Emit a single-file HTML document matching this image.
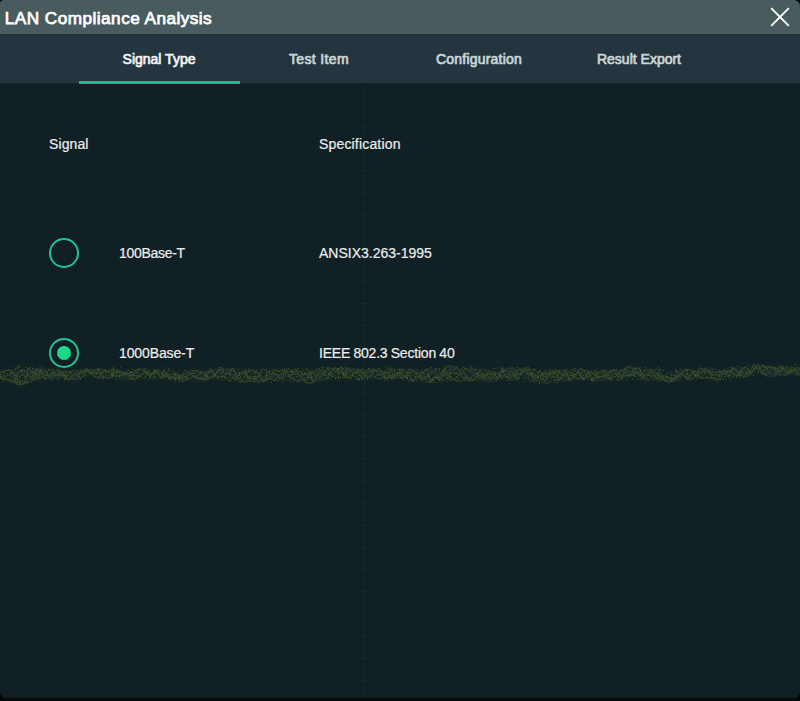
<!DOCTYPE html>
<html><head><meta charset="utf-8">
<style>
html,body{margin:0;padding:0;background:#000;}
body{width:800px;height:701px;position:relative;overflow:hidden;font-family:"Liberation Sans",sans-serif;}
#win{position:absolute;left:0;top:0;width:800px;height:698px;background:#102025;border-radius:4px 6px 6px 6px;overflow:hidden;}
#title{position:absolute;left:0;top:0;width:800px;height:34px;background:#485c5d;}
#title .t{position:absolute;left:4.8px;top:6.8px;font-size:17.2px;line-height:22px;color:#fff;-webkit-text-stroke:0.75px #fff;white-space:nowrap;letter-spacing:0.46px;}
#close{position:absolute;left:768px;top:5px;width:24px;height:24px;}
#tabs{position:absolute;left:0;top:34px;width:800px;height:50px;background:#24353f;}
#tabs .l1{position:absolute;left:0;top:0;width:800px;height:1px;background:#1f2e37;}
#tabs .l2{position:absolute;left:0;top:48px;width:800px;height:1px;background:#27373a;}
#tabs .l3{position:absolute;left:0;top:49px;width:800px;height:1px;background:#18272b;}
.tab{position:absolute;top:0;width:160px;height:50px;text-align:center;font-size:14px;line-height:50px;color:#ccd5d8;-webkit-text-stroke:0.7px #ccd5d8;}
.tab.sel{color:#f3f5f5;-webkit-text-stroke:0.7px #f3f5f5;}
#ul{position:absolute;left:79px;top:46.8px;width:161px;height:3.2px;background:#19bc86;}
.txt{position:absolute;font-size:14px;line-height:16px;color:#eceeee;white-space:nowrap;-webkit-text-stroke:0.2px #eceeee;}
.radio{position:absolute;width:26px;height:26px;border:2px solid #22c58b;border-radius:50%;}
.dot{position:absolute;left:6px;top:6px;width:14px;height:14px;border-radius:50%;background:#1ed88a;}
#bottom{position:absolute;left:0;top:698px;width:800px;height:3px;background:#070a0b;}
#bline{position:absolute;left:0;top:697px;width:800px;height:1px;background:#131d1f;}
#tl4{position:absolute;left:0;top:84px;width:800px;height:1px;background:#0e1b1f;}
</style></head>
<body>
<div id="win">
  <div id="title"><div class="t">LAN Compliance Analysis</div>
    <svg id="close" viewBox="0 0 24 24"><path d="M3.2 3.2 L20.8 20.8 M20.8 3.2 L3.2 20.8" stroke="#fff" stroke-width="1.9" fill="none"/></svg>
  </div>
  <div id="tabs"><div class="l1"></div><div class="l2"></div><div class="l3"></div>
    <div class="tab sel" style="left:79px;letter-spacing:0px">Signal Type</div>
    <div class="tab" style="left:239px;letter-spacing:0.37px">Test Item</div>
    <div class="tab" style="left:399px;letter-spacing:0.2px">Configuration</div>
    <div class="tab" style="left:559px;letter-spacing:0px">Result Export</div>
    <div id="ul"></div>
  </div>
  <svg style="position:absolute;left:0;top:0" width="800" height="697"><line x1="173.5" y1="84" x2="173.5" y2="697" stroke="#17262b" stroke-width="1" stroke-dasharray="1 3"/><line x1="555.5" y1="84" x2="555.5" y2="697" stroke="#17262b" stroke-width="1" stroke-dasharray="1 3"/><line x1="746.5" y1="84" x2="746.5" y2="697" stroke="#17262b" stroke-width="1" stroke-dasharray="1 3"/><line x1="0" y1="147.5" x2="800" y2="147.5" stroke="#17262b" stroke-width="1" stroke-dasharray="1 3"/><line x1="0" y1="258.5" x2="800" y2="258.5" stroke="#17262b" stroke-width="1" stroke-dasharray="1 3"/><line x1="0" y1="369.5" x2="800" y2="369.5" stroke="#17262b" stroke-width="1" stroke-dasharray="1 3"/><line x1="0" y1="480.5" x2="800" y2="480.5" stroke="#17262b" stroke-width="1" stroke-dasharray="1 3"/><line x1="0" y1="591.5" x2="800" y2="591.5" stroke="#17262b" stroke-width="1" stroke-dasharray="1 3"/><line x1="363.5" y1="84" x2="363.5" y2="697" stroke="#0f1b1f" stroke-width="1"/><line x1="365.5" y1="84" x2="365.5" y2="697" stroke="#0f1b1f" stroke-width="1"/><line x1="364.5" y1="84" x2="364.5" y2="697" stroke="#1a2a2f" stroke-width="1"/><path d="M362 104.01 h5 M362 126.18 h5 M362 148.35000000000002 h5 M362 170.52 h5 M362 192.69 h5 M362 214.86 h5 M362 237.03000000000003 h5 M362 259.20000000000005 h5 M362 281.37 h5 M362 303.54 h5 M362 325.71000000000004 h5 M362 347.88 h5 M362 370.05 h5 M362 392.22 h5 M362 414.39000000000004 h5 M362 436.56000000000006 h5 M362 458.73 h5 M362 480.90000000000003 h5 M362 503.07000000000005 h5 M362 525.24 h5 M362 547.4100000000001 h5 M362 569.58 h5 M362 591.75 h5 M362 613.9200000000001 h5 M362 636.09 h5 M362 658.26 h5 M362 680.4300000000001 h5 " stroke="#1c2c31" stroke-width="1"/></svg>
  <svg id="trace" style="position:absolute;left:0;top:355px" width="800" height="40"><defs><filter id="bl" x="-1%" y="-20%" width="102%" height="140%"><feGaussianBlur stdDeviation="0.55"/></filter></defs><g filter="url(#bl)"><path d="M0 15.1 L4 15.2 L8 13.3 L12 11.3 L16 10.9 L20 8.5 L24 9.6 L28 11.4 L32 11.9 L36 11.0 L40 10.4 L44 12.1 L48 12.4 L52 12.5 L56 13.3 L60 13.3 L64 13.4 L68 13.9 L72 15.4 L76 15.0 L80 13.3 L84 12.3 L88 12.7 L92 12.6 L96 13.0 L100 11.3 L104 13.1 L108 13.1 L112 11.2 L116 13.0 L120 12.4 L124 15.0 L128 13.6 L132 13.2 L136 13.8 L140 12.8 L144 12.0 L148 12.0 L152 12.2 L156 12.2 L160 13.3 L164 11.9 L168 12.1 L172 14.3 L176 13.8 L180 14.4 L184 15.3 L188 13.8 L192 13.0 L196 13.3 L200 13.7 L204 14.6 L208 13.0 L212 11.2 L216 12.0 L220 10.7 L224 12.3 L228 11.9 L232 13.7 L236 12.7 L240 11.7 L244 12.3 L248 12.8 L252 13.9 L256 13.1 L260 12.2 L264 12.2 L268 11.7 L272 12.2 L276 10.8 L280 12.2 L284 11.8 L288 12.4 L292 11.8 L296 13.2 L300 13.3 L304 13.0 L308 13.0 L312 13.8 L316 11.6 L320 11.8 L324 11.2 L328 10.8 L332 12.2 L336 11.9 L340 11.5 L344 10.3 L348 11.8 L352 11.6 L356 13.4 L360 13.4 L364 13.2 L368 11.7 L372 13.2 L376 12.8 L380 13.1 L384 12.6 L388 11.5 L392 10.8 L396 11.4 L400 12.1 L404 12.6 L408 12.7 L412 13.2 L416 12.9 L420 13.9 L424 12.8 L428 12.8 L432 12.7 L436 13.7 L440 12.9 L444 11.1 L448 9.1 L452 10.3 L456 10.5 L460 10.2 L464 10.9 L468 10.4 L472 11.1 L476 10.9 L480 13.0 L484 12.0 L488 14.0 L492 13.3 L496 11.8 L500 10.7 L504 11.4 L508 12.4 L512 11.3 L516 12.2 L520 11.9 L524 12.1 L528 12.3 L532 12.8 L536 12.9 L540 14.9 L544 13.9 L548 14.2 L552 13.7 L556 13.3 L560 14.6 L564 14.6 L568 12.6 L572 12.9 L576 11.8 L580 12.9 L584 13.8 L588 14.0 L592 14.6 L596 14.4 L600 13.2 L604 14.4 L608 13.5 L612 13.2 L616 14.0 L620 11.7 L624 11.5 L628 10.5 L632 11.0 L636 11.3 L640 11.0 L644 10.9 L648 11.6 L652 12.2 L656 12.8 L660 13.6 L664 12.9 L668 13.4 L672 13.8 L676 13.4 L680 11.7 L684 12.6 L688 11.5 L692 13.3 L696 12.5 L700 12.0 L704 11.8 L708 12.6 L712 12.1 L716 13.2 L720 13.7 L724 12.9 L728 12.9 L732 10.8 L736 10.1 L740 11.4 L744 10.6 L748 9.4 L752 10.0 L756 9.0 L760 7.8 L764 9.4 L768 9.6 L772 9.5 L776 9.5 L780 9.4 L784 9.8 L788 9.7 L792 10.3 L796 9.6 L800 9.9 L800 21.7 L796 22.6 L792 21.7 L788 22.0 L784 21.9 L780 21.7 L776 22.8 L772 23.4 L768 22.7 L764 21.4 L760 20.7 L756 20.4 L752 21.4 L748 23.3 L744 23.3 L740 24.6 L736 23.7 L732 24.2 L728 25.9 L724 25.7 L720 25.4 L716 26.0 L712 25.9 L708 24.7 L704 23.6 L700 24.9 L696 24.9 L692 25.8 L688 26.4 L684 26.5 L680 25.8 L676 27.0 L672 28.0 L668 28.9 L664 28.3 L660 26.8 L656 27.1 L652 27.3 L648 27.4 L644 26.0 L640 26.8 L636 24.7 L632 23.9 L628 23.8 L624 25.9 L620 26.1 L616 26.5 L612 27.6 L608 27.0 L604 27.1 L600 27.0 L596 27.2 L592 27.7 L588 26.2 L584 26.1 L580 26.3 L576 25.9 L572 27.3 L568 27.3 L564 28.5 L560 27.4 L556 28.8 L552 28.9 L548 28.8 L544 29.0 L540 28.7 L536 28.7 L532 27.1 L528 26.1 L524 27.1 L520 26.6 L516 26.5 L512 25.7 L508 25.8 L504 25.1 L500 25.5 L496 27.5 L492 27.9 L488 27.4 L484 27.2 L480 27.4 L476 27.6 L472 26.8 L468 26.9 L464 26.8 L460 26.5 L456 27.7 L452 27.2 L448 26.7 L444 27.0 L440 28.1 L436 29.8 L432 28.7 L428 28.7 L424 28.7 L420 28.0 L416 27.1 L412 27.9 L408 25.9 L404 26.6 L400 24.7 L396 23.9 L392 25.0 L388 26.0 L384 26.6 L380 26.0 L376 25.4 L372 26.3 L368 26.1 L364 26.6 L360 26.3 L356 26.3 L352 25.9 L348 25.3 L344 24.8 L340 25.7 L336 25.9 L332 26.8 L328 26.2 L324 27.1 L320 27.0 L316 27.7 L312 29.4 L308 29.9 L304 28.1 L300 28.6 L296 28.1 L292 28.2 L288 26.9 L284 27.5 L280 26.7 L276 26.6 L272 26.0 L268 26.2 L264 28.0 L260 27.6 L256 29.2 L252 28.3 L248 28.8 L244 27.9 L240 28.2 L236 26.5 L232 27.4 L228 27.6 L224 26.6 L220 24.4 L216 25.4 L212 24.6 L208 26.9 L204 26.8 L200 26.9 L196 27.0 L192 26.9 L188 26.2 L184 27.3 L180 27.3 L176 28.3 L172 26.6 L168 25.2 L164 25.7 L160 25.6 L156 24.9 L152 25.3 L148 25.6 L144 25.5 L140 25.1 L136 25.1 L132 25.6 L128 26.4 L124 27.1 L120 25.4 L116 24.5 L112 24.8 L108 24.4 L104 24.8 L100 24.2 L96 24.7 L92 23.0 L88 23.0 L84 23.1 L80 24.5 L76 26.3 L72 27.1 L68 25.3 L64 25.7 L60 25.7 L56 26.4 L52 25.8 L48 25.4 L44 25.0 L40 24.9 L36 26.6 L32 28.4 L28 28.5 L24 32.3 L20 32.9 L16 31.6 L12 28.8 L8 27.8 L4 27.5 L0 27.3 Z" fill="#1a2a22" opacity="0.55"/><path d="M-2 19.9 L3 25.3 L7 23.7 L14 27.5 L18 17.2 L25 15.4 L32 25.4 L35 14.7 L41 15.3 L44 23.2 L49 22.9 L53 18.6 L58 14.0 L62 21.4 L69 25.0 L72 20.3 L78 19.8 L84 15.2 L87 13.8 L90 18.1 L96 18.7 L99 14.9 L103 22.5 L110 23.2 L113 13.3 L120 19.1 L126 18.6 L131 20.6 L136 20.7 L139 21.4 L145 15.2 L150 21.9 L155 15.6 L158 19.0 L161 23.2 L167 21.3 L174 22.0 L179 22.5 L184 26.9 L190 17.6 L196 23.3 L203 24.2 L207 24.6 L214 20.7 L220 21.4 L224 21.8 L228 17.5 L233 13.6 L237 21.9 L242 16.4 L249 23.2 L254 23.6 L259 21.3 L263 26.9 L269 21.8 L275 26.1 L278 21.4 L284 16.6 L289 13.4 L292 18.0 L296 16.4 L302 21.9 L308 28.2 L313 27.7 L318 23.7 L322 20.3 L328 12.8 L334 14.2 L339 13.7 L344 18.9 L348 23.3 L352 18.9 L358 18.0 L362 21.8 L367 16.6 L373 16.3 L376 15.8 L379 15.0 L385 17.9 L392 21.3 L395 23.9 L402 13.4 L408 19.2 L413 26.8 L417 20.9 L424 23.5 L429 27.7 L435 22.6 L439 22.5 L443 14.8 L447 19.0 L450 17.1 L456 17.7 L460 20.2 L464 23.4 L470 26.4 L476 22.6 L480 14.3 L487 24.8 L492 18.3 L496 22.0 L502 20.0 L507 22.4 L511 15.8 L518 24.8 L524 12.5 L528 16.1 L532 22.1 L536 21.9 L539 16.1 L545 22.4 L550 19.3 L555 16.9 L560 24.3 L566 15.1 L569 24.1 L575 22.5 L579 17.9 L583 23.2 L587 22.0 L594 18.5 L599 22.9 L606 19.0 L611 15.2 L617 14.7 L620 20.1 L625 20.5 L630 21.2 L633 13.8 L639 12.7 L643 22.2 L649 16.1 L652 17.1 L658 17.9 L661 23.4 L667 26.9 L674 25.9 L678 23.3 L682 16.5 L687 24.4 L694 16.0 L698 17.1 L703 16.9 L707 14.5 L712 22.5 L718 23.8 L723 15.7 L729 22.9 L733 11.9 L738 17.9 L743 22.8 L749 20.0 L752 16.2 L758 9.8 L762 17.8 L768 11.4 L774 12.5 L780 17.9 L784 12.8 L790 16.4 L796 15.1 L800 20.8" stroke="#4a582c" stroke-width="1" fill="none" opacity="0.65"/><path d="M-2 15.9 L3 23.7 L9 26.0 L14 26.1 L19 29.2 L26 27.2 L32 26.3 L38 18.7 L43 22.8 L48 18.5 L52 22.4 L59 18.0 L62 16.1 L67 17.5 L74 15.6 L78 15.8 L84 21.3 L87 13.3 L92 18.5 L99 13.2 L102 15.0 L106 15.4 L112 19.4 L116 15.1 L120 15.8 L126 18.4 L131 24.0 L136 16.7 L143 23.6 L147 19.5 L154 19.0 L158 13.7 L165 22.1 L169 19.6 L174 17.9 L181 23.2 L185 15.2 L190 18.9 L196 22.9 L202 16.3 L205 17.9 L209 23.8 L214 19.9 L221 15.3 L227 14.8 L233 13.4 L239 24.7 L245 14.5 L249 24.0 L253 21.0 L258 27.5 L263 25.0 L267 23.2 L272 24.9 L275 23.9 L279 20.4 L284 15.2 L290 17.1 L295 13.8 L299 20.0 L305 19.4 L311 15.7 L315 19.7 L322 23.5 L328 12.3 L332 21.6 L336 19.3 L341 11.5 L348 21.5 L352 19.9 L356 17.9 L361 17.4 L365 18.2 L371 15.9 L375 21.7 L379 24.6 L384 22.0 L389 22.8 L392 13.9 L395 20.1 L401 14.6 L406 23.7 L411 15.2 L415 16.1 L419 19.2 L422 26.2 L427 20.8 L432 25.0 L439 18.9 L443 18.1 L446 17.1 L452 25.7 L458 21.2 L463 11.7 L468 16.6 L473 13.0 L478 19.5 L484 25.1 L489 15.9 L495 25.2 L501 16.9 L506 14.0 L511 25.9 L517 22.1 L523 14.7 L530 21.4 L533 14.9 L537 22.7 L543 19.5 L550 19.1 L555 15.7 L562 16.1 L568 20.9 L574 20.0 L578 24.0 L585 23.5 L590 16.0 L596 17.9 L603 16.8 L608 23.9 L612 20.7 L615 14.3 L619 25.8 L626 20.1 L630 19.8 L636 16.4 L641 23.2 L644 14.9 L649 14.1 L654 20.2 L657 19.9 L661 21.4 L666 23.0 L669 23.4 L673 26.8 L678 19.0 L683 20.4 L688 22.2 L694 18.9 L701 22.3 L708 17.1 L712 19.7 L719 20.1 L724 18.5 L731 15.8 L734 20.2 L741 20.1 L746 19.9 L750 17.2 L753 10.8 L758 14.8 L763 9.9 L769 16.6 L773 14.4 L777 13.4 L780 20.8 L787 17.9 L794 15.5 L800 12.6" stroke="#3e4c2a" stroke-width="1" fill="none" opacity="0.65"/><path d="M-2 16.7 L5 15.9 L11 14.8 L16 29.5 L19 15.6 L23 17.5 L26 27.9 L33 17.5 L37 19.7 L40 12.1 L47 17.0 L52 24.6 L59 19.1 L63 17.1 L69 24.3 L73 23.9 L77 19.6 L81 23.0 L88 14.6 L94 14.5 L100 13.4 L104 21.2 L108 23.0 L114 20.9 L118 21.3 L125 19.8 L128 17.4 L132 22.6 L136 15.8 L140 20.8 L146 17.5 L152 23.6 L157 15.8 L161 23.6 L167 16.2 L173 15.3 L179 20.7 L185 21.5 L188 21.9 L192 17.3 L198 15.5 L202 23.5 L206 17.2 L211 14.8 L218 24.1 L221 17.7 L227 17.9 L234 20.1 L238 20.8 L243 18.2 L249 24.8 L254 21.4 L260 23.2 L265 25.8 L269 22.9 L273 20.5 L277 18.6 L283 24.2 L289 16.0 L294 15.8 L299 20.5 L302 22.5 L308 22.5 L315 15.9 L318 12.9 L323 18.0 L328 15.7 L334 13.1 L341 18.7 L346 21.2 L350 13.7 L354 13.4 L358 21.3 L364 16.8 L369 14.0 L375 14.9 L379 15.0 L385 23.3 L391 13.1 L396 16.3 L400 23.8 L403 18.7 L409 26.4 L412 20.0 L418 14.3 L422 25.8 L426 19.0 L430 19.9 L433 14.3 L440 24.2 L446 14.3 L450 18.9 L454 17.6 L461 16.9 L465 26.4 L471 12.0 L475 21.2 L479 17.2 L484 25.8 L490 26.1 L495 18.4 L501 17.2 L507 15.1 L512 15.0 L517 14.6 L521 15.0 L525 16.3 L530 26.6 L536 26.4 L540 20.3 L543 24.6 L548 18.2 L551 16.6 L555 19.4 L561 23.9 L565 19.0 L569 25.9 L573 22.7 L579 24.0 L582 17.0 L587 15.0 L593 18.5 L600 20.3 L603 18.6 L607 14.4 L610 21.2 L613 17.9 L618 20.3 L622 21.6 L626 21.0 L631 12.8 L635 14.9 L641 17.6 L646 24.4 L650 16.2 L654 15.2 L657 12.9 L663 21.6 L669 27.6 L673 22.8 L680 15.4 L685 20.9 L692 23.6 L696 20.5 L700 17.6 L704 12.8 L709 16.2 L714 16.5 L717 18.5 L722 15.6 L728 15.4 L731 16.0 L736 13.2 L741 19.7 L746 19.2 L750 14.9 L754 10.0 L759 9.5 L764 16.3 L769 14.2 L773 11.1 L777 20.9 L782 13.3 L788 12.5 L793 17.6 L800 14.2" stroke="#2e3e38" stroke-width="1" fill="none" opacity="0.65"/><path d="M-2 20.9 L4 22.5 L10 19.1 L14 16.6 L21 29.9 L25 28.8 L28 13.9 L33 16.0 L38 25.2 L41 14.4 L45 21.4 L49 13.7 L54 18.4 L58 19.4 L64 20.0 L69 20.7 L76 25.1 L80 17.8 L87 16.0 L92 19.6 L98 23.6 L104 14.6 L110 18.2 L115 17.1 L119 22.2 L125 17.4 L129 18.6 L132 20.3 L136 14.5 L139 14.4 L145 14.4 L150 22.2 L155 15.3 L161 22.9 L164 15.7 L169 22.8 L174 23.0 L178 23.8 L182 19.4 L188 24.7 L194 21.1 L199 22.9 L205 24.2 L211 14.2 L215 20.2 L219 14.0 L222 19.6 L229 26.0 L233 22.6 L237 21.8 L242 25.9 L249 14.6 L255 16.0 L258 18.0 L264 26.7 L267 16.7 L270 19.5 L275 17.5 L280 24.2 L286 16.9 L291 21.5 L297 27.0 L301 23.7 L306 25.8 L310 16.8 L313 26.7 L317 19.5 L321 16.7 L324 19.8 L327 20.6 L332 15.3 L336 16.7 L341 12.0 L344 22.5 L348 12.5 L352 18.3 L359 16.1 L365 19.3 L370 22.8 L374 13.5 L380 21.1 L385 16.5 L392 22.7 L399 17.4 L405 22.2 L409 14.2 L413 15.7 L416 18.7 L422 17.8 L427 13.7 L431 27.7 L434 21.5 L440 24.7 L446 17.1 L452 23.3 L458 26.3 L462 26.0 L466 22.2 L470 25.0 L473 20.0 L477 17.6 L482 22.4 L488 18.9 L494 18.0 L498 24.8 L502 13.3 L506 22.2 L510 22.5 L515 21.7 L519 13.6 L523 16.8 L527 12.4 L532 19.1 L537 22.0 L543 17.7 L550 18.6 L556 15.5 L563 20.1 L570 16.4 L574 21.7 L578 16.0 L584 25.0 L588 16.5 L593 26.4 L596 22.0 L601 21.6 L605 21.1 L611 24.5 L617 20.1 L622 14.0 L628 20.1 L633 19.9 L638 16.8 L642 20.4 L647 19.5 L650 21.1 L655 20.7 L660 26.2 L664 20.4 L671 24.1 L675 23.2 L682 17.6 L688 14.2 L695 18.9 L699 22.6 L705 23.3 L711 22.3 L716 25.5 L720 24.2 L725 16.1 L732 17.2 L737 21.7 L741 14.7 L746 11.7 L751 19.2 L756 11.8 L763 19.3 L769 16.9 L775 20.0 L779 14.7 L782 10.7 L787 20.1 L793 12.1 L797 15.0" stroke="#4a582c" stroke-width="1" fill="none" opacity="0.65"/><path d="M-2 17.3 L5 15.6 L12 15.8 L17 28.6 L23 14.8 L29 18.9 L32 16.8 L36 20.4 L40 19.9 L46 15.3 L49 21.8 L54 15.4 L58 24.4 L63 17.8 L67 25.1 L73 22.8 L77 18.0 L82 15.3 L87 17.0 L94 16.8 L98 18.4 L105 16.7 L111 15.2 L116 16.3 L123 17.7 L129 22.6 L134 24.8 L139 21.9 L144 18.2 L147 18.1 L151 18.5 L158 16.5 L164 20.6 L168 18.0 L171 24.5 L175 19.9 L180 25.2 L186 22.0 L191 15.6 L198 15.5 L202 18.9 L208 21.5 L213 23.4 L220 11.9 L225 18.6 L230 19.4 L234 22.4 L239 26.4 L246 27.2 L251 25.7 L256 24.0 L263 13.7 L268 17.6 L274 15.1 L281 15.8 L285 14.9 L290 23.3 L293 15.0 L299 22.2 L305 17.9 L311 24.4 L317 14.5 L322 12.4 L328 24.8 L335 12.4 L339 18.4 L344 12.6 L351 15.8 L356 14.7 L361 15.3 L364 19.8 L368 22.6 L372 17.8 L376 15.5 L380 20.0 L385 23.5 L389 23.0 L392 23.9 L397 16.8 L403 23.3 L410 19.2 L413 16.1 L419 23.6 L425 15.7 L430 14.2 L433 18.2 L440 22.3 L447 11.3 L451 11.3 L455 12.3 L462 16.5 L467 21.4 L474 25.5 L479 19.6 L486 19.2 L490 24.0 L494 18.2 L498 18.8 L503 17.8 L508 12.9 L514 13.3 L519 19.7 L524 15.0 L527 17.4 L531 19.9 L535 24.6 L540 15.1 L545 28.2 L548 22.6 L555 19.0 L560 19.2 L564 22.4 L570 17.6 L575 19.3 L581 13.4 L584 16.5 L588 23.9 L593 24.9 L597 17.8 L603 14.9 L610 24.1 L614 17.9 L621 22.9 L626 12.1 L632 11.5 L638 19.1 L645 21.2 L648 25.5 L654 20.4 L657 22.9 L661 22.9 L668 26.8 L672 24.6 L676 23.1 L681 18.3 L686 13.9 L690 22.0 L693 14.3 L700 20.5 L705 13.4 L708 15.9 L715 20.1 L722 16.2 L726 19.3 L733 13.1 L739 17.0 L742 16.4 L747 18.8 L754 15.2 L759 13.5 L765 11.1 L771 12.7 L777 13.0 L781 12.2 L786 17.0 L791 15.0 L796 20.1 L800 16.5" stroke="#3e4c2a" stroke-width="1" fill="none" opacity="0.65"/><path d="M-2 21.3 L2 23.4 L6 17.6 L12 21.6 L16 12.3 L22 18.6 L28 19.0 L34 19.7 L41 24.1 L46 19.0 L49 22.5 L53 17.5 L59 14.2 L65 20.3 L70 18.3 L74 25.0 L80 22.6 L83 21.5 L87 14.7 L92 18.8 L96 20.9 L101 23.2 L108 20.5 L112 23.5 L118 16.7 L125 23.0 L129 17.7 L132 20.7 L136 17.1 L140 14.7 L145 16.2 L149 16.5 L154 23.5 L158 23.1 L164 19.8 L169 22.0 L174 22.5 L181 24.6 L185 15.8 L192 18.7 L198 17.2 L203 18.8 L209 24.9 L214 19.1 L218 14.5 L225 13.9 L232 22.1 L235 25.5 L238 20.9 L242 26.7 L246 25.6 L249 23.3 L253 14.7 L258 27.8 L264 24.8 L270 19.2 L273 19.4 L277 19.9 L281 20.0 L285 23.0 L290 19.6 L293 19.6 L298 27.2 L303 16.0 L308 19.2 L313 26.8 L320 25.3 L327 23.7 L334 12.4 L339 19.2 L344 18.9 L350 23.5 L353 19.1 L360 14.1 L364 24.3 L370 13.1 L373 22.9 L379 19.4 L385 22.4 L391 12.4 L394 21.6 L401 22.4 L406 17.4 L410 14.2 L416 17.4 L421 20.7 L426 23.0 L431 17.2 L437 16.0 L441 16.3 L446 23.2 L450 13.8 L456 14.6 L461 15.2 L467 14.2 L471 15.9 L475 22.4 L481 24.2 L486 14.8 L492 16.7 L496 18.4 L503 17.0 L508 24.6 L515 17.8 L518 23.1 L524 16.6 L530 18.2 L535 22.3 L540 21.6 L547 14.7 L552 19.2 L555 26.5 L559 17.0 L565 26.9 L572 17.5 L579 14.3 L584 25.1 L588 15.9 L594 25.1 L600 25.2 L605 18.3 L608 17.2 L615 14.8 L619 17.8 L622 16.5 L626 13.1 L631 18.0 L636 21.6 L641 25.1 L644 15.3 L648 16.5 L654 25.3 L659 15.1 L663 21.7 L667 25.1 L674 19.7 L680 23.6 L684 14.8 L691 25.0 L694 22.3 L699 13.2 L702 14.2 L708 14.8 L712 15.4 L718 19.7 L723 19.1 L727 12.9 L731 12.3 L735 18.8 L740 17.0 L745 14.8 L750 20.8 L755 14.0 L760 14.4 L765 20.3 L768 21.3 L775 21.0 L779 16.4 L785 13.5 L789 18.6 L793 17.3 L797 21.2 L801 11.1" stroke="#2e3e38" stroke-width="1" fill="none" opacity="0.65"/><g shape-rendering="crispEdges"><path d="M0 22h1v1h-1zM1 19h1v1h-1zM1 21h1v1h-1zM1 23h1v1h-1zM2 17h1v1h-1zM3 20h1v1h-1zM3 24h1v1h-1zM4 17h1v1h-1zM5 23h1v1h-1zM10 17h1v1h-1zM10 18h1v1h-1zM10 24h1v1h-1zM15 14h1v1h-1zM15 27h1v1h-1zM16 20h1v1h-1zM17 23h1v1h-1zM17 27h1v1h-1zM17 29h1v1h-1zM18 12h1v1h-1zM19 10h1v1h-1zM19 21h1v1h-1zM19 26h1v1h-1zM19 29h1v1h-1zM20 15h1v1h-1zM20 26h1v1h-1zM20 27h1v1h-1zM20 32h1v1h-1zM21 16h1v1h-1zM22 14h1v1h-1zM22 26h1v1h-1zM23 28h1v1h-1zM24 22h1v1h-1zM25 12h1v1h-1zM25 15h1v1h-1zM25 21h1v1h-1zM26 21h1v1h-1zM26 27h1v1h-1zM27 13h1v1h-1zM27 20h1v1h-1zM27 27h1v1h-1zM27 28h1v1h-1zM29 12h1v1h-1zM31 21h1v1h-1zM33 21h1v1h-1zM33 22h1v1h-1zM34 16h1v1h-1zM34 24h1v1h-1zM35 15h1v1h-1zM35 18h1v1h-1zM35 22h1v1h-1zM36 15h1v1h-1zM36 17h1v1h-1zM37 13h1v1h-1zM37 18h1v1h-1zM38 23h1v1h-1zM39 16h1v1h-1zM39 17h1v1h-1zM39 22h1v1h-1zM40 14h1v1h-1zM42 17h1v1h-1zM44 23h1v1h-1zM45 24h1v1h-1zM46 19h1v1h-1zM47 20h1v1h-1zM49 20h1v1h-1zM49 21h1v1h-1zM50 24h1v1h-1zM51 19h1v1h-1zM52 17h1v1h-1zM52 18h1v1h-1zM53 20h1v1h-1zM53 22h1v1h-1zM55 20h1v1h-1zM58 16h1v1h-1zM61 17h1v1h-1zM61 20h1v1h-1zM63 20h1v1h-1zM64 20h1v1h-1zM64 24h1v1h-1zM65 16h1v1h-1zM66 21h1v1h-1zM66 22h1v1h-1zM68 24h1v1h-1zM69 17h1v1h-1zM73 18h1v1h-1zM75 18h1v1h-1zM77 17h1v1h-1zM79 21h1v1h-1zM80 15h1v1h-1zM80 23h1v1h-1zM83 18h1v1h-1zM84 19h1v1h-1zM86 14h1v1h-1zM89 16h1v1h-1zM91 15h1v1h-1zM91 17h1v1h-1zM94 15h1v1h-1zM95 21h1v1h-1zM96 18h1v1h-1zM98 14h1v1h-1zM98 17h1v1h-1zM99 22h1v1h-1zM101 19h1v1h-1zM102 17h1v1h-1zM104 15h1v1h-1zM105 17h1v1h-1zM106 15h1v1h-1zM107 16h1v1h-1zM111 15h1v1h-1zM111 20h1v1h-1zM112 19h1v1h-1zM112 20h1v1h-1zM112 21h1v1h-1zM113 14h1v1h-1zM113 18h1v1h-1zM113 19h1v1h-1zM113 20h1v1h-1zM115 21h1v1h-1zM116 20h1v1h-1zM116 24h1v1h-1zM119 20h1v1h-1zM121 22h1v1h-1zM125 23h1v1h-1zM128 15h1v1h-1zM129 17h1v1h-1zM130 17h1v1h-1zM130 23h1v1h-1zM131 16h1v1h-1zM131 17h1v1h-1zM131 19h1v1h-1zM131 20h1v1h-1zM132 14h1v1h-1zM132 17h1v1h-1zM133 20h1v1h-1zM133 23h1v1h-1zM136 16h1v1h-1zM136 20h1v1h-1zM137 23h1v1h-1zM138 13h1v1h-1zM138 15h1v1h-1zM140 21h1v1h-1zM145 16h1v1h-1zM145 22h1v1h-1zM146 18h1v1h-1zM147 16h1v1h-1zM149 16h1v1h-1zM149 21h1v1h-1zM150 22h1v1h-1zM151 18h1v1h-1zM151 19h1v1h-1zM154 15h1v1h-1zM155 15h1v1h-1zM158 18h1v1h-1zM162 10h1v1h-1zM163 14h1v1h-1zM163 17h1v1h-1zM165 18h1v1h-1zM166 20h1v1h-1zM167 18h1v1h-1zM168 13h1v1h-1zM168 15h1v1h-1zM169 23h1v1h-1zM171 21h1v1h-1zM174 19h1v1h-1zM175 22h1v1h-1zM175 23h1v1h-1zM175 24h1v1h-1zM177 20h1v1h-1zM178 21h1v1h-1zM179 20h1v1h-1zM179 21h1v1h-1zM179 24h1v1h-1zM179 26h1v1h-1zM182 25h1v1h-1zM185 22h1v1h-1zM186 18h1v1h-1zM187 23h1v1h-1zM191 19h1v1h-1zM193 18h1v1h-1zM194 21h1v1h-1zM196 20h1v1h-1zM199 19h1v1h-1zM200 18h1v1h-1zM202 17h1v1h-1zM203 25h1v1h-1zM204 20h1v1h-1zM205 18h1v1h-1zM205 19h1v1h-1zM205 21h1v1h-1zM206 18h1v1h-1zM206 20h1v1h-1zM207 22h1v1h-1zM208 17h1v1h-1zM209 17h1v1h-1zM211 15h1v1h-1zM212 21h1v1h-1zM213 19h1v1h-1zM215 20h1v1h-1zM217 22h1v1h-1zM218 14h1v1h-1zM218 15h1v1h-1zM221 12h1v1h-1zM223 17h1v1h-1zM225 19h1v1h-1zM226 18h1v1h-1zM229 17h1v1h-1zM229 22h1v1h-1zM230 18h1v1h-1zM231 15h1v1h-1zM231 16h1v1h-1zM233 16h1v1h-1zM234 15h1v1h-1zM234 22h1v1h-1zM234 24h1v1h-1zM238 19h1v1h-1zM239 17h1v1h-1zM239 18h1v1h-1zM239 20h1v1h-1zM240 21h1v1h-1zM240 24h1v1h-1zM243 17h1v1h-1zM244 15h1v1h-1zM244 18h1v1h-1zM244 22h1v1h-1zM245 15h1v1h-1zM245 17h1v1h-1zM246 16h1v1h-1zM247 22h1v1h-1zM249 16h1v1h-1zM249 21h1v1h-1zM249 23h1v1h-1zM249 25h1v1h-1zM253 21h1v1h-1zM254 18h1v1h-1zM254 21h1v1h-1zM254 25h1v1h-1zM254 26h1v1h-1zM255 17h1v1h-1zM255 23h1v1h-1zM256 15h1v1h-1zM259 20h1v1h-1zM261 15h1v1h-1zM264 25h1v1h-1zM265 21h1v1h-1zM266 19h1v1h-1zM266 20h1v1h-1zM267 24h1v1h-1zM268 17h1v1h-1zM269 16h1v1h-1zM271 19h1v1h-1zM271 27h1v1h-1zM272 15h1v1h-1zM272 18h1v1h-1zM273 22h1v1h-1zM275 19h1v1h-1zM276 15h1v1h-1zM277 16h1v1h-1zM278 20h1v1h-1zM278 25h1v1h-1zM279 16h1v1h-1zM279 22h1v1h-1zM280 15h1v1h-1zM280 19h1v1h-1zM282 14h1v1h-1zM282 21h1v1h-1zM282 23h1v1h-1zM283 19h1v1h-1zM285 16h1v1h-1zM285 20h1v1h-1zM286 25h1v1h-1zM289 25h1v1h-1zM290 20h1v1h-1zM291 15h1v1h-1zM291 19h1v1h-1zM291 23h1v1h-1zM292 17h1v1h-1zM293 24h1v1h-1zM294 19h1v1h-1zM296 15h1v1h-1zM296 21h1v1h-1zM298 13h1v1h-1zM299 16h1v1h-1zM300 16h1v1h-1zM301 18h1v1h-1zM302 14h1v1h-1zM302 25h1v1h-1zM304 18h1v1h-1zM304 19h1v1h-1zM306 14h1v1h-1zM306 19h1v1h-1zM306 27h1v1h-1zM307 14h1v1h-1zM308 22h1v1h-1zM309 18h1v1h-1zM311 21h1v1h-1zM311 22h1v1h-1zM311 24h1v1h-1zM312 16h1v1h-1zM312 25h1v1h-1zM315 22h1v1h-1zM316 18h1v1h-1zM316 22h1v1h-1zM318 20h1v1h-1zM319 15h1v1h-1zM319 24h1v1h-1zM320 19h1v1h-1zM322 12h1v1h-1zM322 15h1v1h-1zM322 19h1v1h-1zM324 17h1v1h-1zM324 19h1v1h-1zM328 18h1v1h-1zM328 19h1v1h-1zM329 18h1v1h-1zM329 20h1v1h-1zM330 17h1v1h-1zM332 21h1v1h-1zM333 14h1v1h-1zM333 21h1v1h-1zM335 22h1v1h-1zM335 23h1v1h-1zM336 22h1v1h-1zM337 13h1v1h-1zM337 14h1v1h-1zM338 14h1v1h-1zM338 18h1v1h-1zM338 21h1v1h-1zM338 22h1v1h-1zM340 12h1v1h-1zM342 18h1v1h-1zM343 13h1v1h-1zM343 17h1v1h-1zM343 18h1v1h-1zM343 19h1v1h-1zM344 22h1v1h-1zM345 16h1v1h-1zM346 18h1v1h-1zM348 18h1v1h-1zM349 17h1v1h-1zM351 15h1v1h-1zM351 22h1v1h-1zM352 17h1v1h-1zM352 20h1v1h-1zM353 15h1v1h-1zM353 20h1v1h-1zM355 21h1v1h-1zM356 23h1v1h-1zM357 17h1v1h-1zM357 23h1v1h-1zM358 15h1v1h-1zM359 20h1v1h-1zM359 23h1v1h-1zM359 25h1v1h-1zM361 23h1v1h-1zM362 14h1v1h-1zM364 19h1v1h-1zM365 15h1v1h-1zM367 23h1v1h-1zM368 13h1v1h-1zM369 15h1v1h-1zM370 21h1v1h-1zM373 14h1v1h-1zM375 21h1v1h-1zM377 20h1v1h-1zM378 18h1v1h-1zM380 23h1v1h-1zM381 16h1v1h-1zM383 19h1v1h-1zM384 20h1v1h-1zM384 22h1v1h-1zM385 22h1v1h-1zM386 11h1v1h-1zM388 19h1v1h-1zM388 21h1v1h-1zM388 22h1v1h-1zM389 17h1v1h-1zM391 15h1v1h-1zM391 22h1v1h-1zM391 23h1v1h-1zM392 19h1v1h-1zM394 14h1v1h-1zM394 20h1v1h-1zM397 14h1v1h-1zM399 14h1v1h-1zM400 17h1v1h-1zM401 22h1v1h-1zM401 23h1v1h-1zM402 17h1v1h-1zM402 22h1v1h-1zM406 20h1v1h-1zM406 22h1v1h-1zM407 18h1v1h-1zM407 22h1v1h-1zM407 23h1v1h-1zM408 17h1v1h-1zM411 23h1v1h-1zM411 25h1v1h-1zM412 15h1v1h-1zM412 25h1v1h-1zM415 21h1v1h-1zM416 18h1v1h-1zM419 20h1v1h-1zM421 16h1v1h-1zM421 17h1v1h-1zM421 23h1v1h-1zM422 18h1v1h-1zM424 18h1v1h-1zM427 20h1v1h-1zM427 23h1v1h-1zM428 26h1v1h-1zM429 20h1v1h-1zM429 21h1v1h-1zM431 12h1v1h-1zM432 24h1v1h-1zM433 25h1v1h-1zM435 13h1v1h-1zM435 14h1v1h-1zM435 16h1v1h-1zM436 23h1v1h-1zM438 24h1v1h-1zM439 25h1v1h-1zM441 25h1v1h-1zM442 15h1v1h-1zM442 24h1v1h-1zM444 11h1v1h-1zM444 13h1v1h-1zM444 14h1v1h-1zM444 20h1v1h-1zM446 12h1v1h-1zM446 20h1v1h-1zM446 23h1v1h-1zM447 16h1v1h-1zM448 22h1v1h-1zM449 12h1v1h-1zM450 14h1v1h-1zM450 19h1v1h-1zM450 21h1v1h-1zM451 17h1v1h-1zM452 11h1v1h-1zM453 15h1v1h-1zM454 19h1v1h-1zM455 18h1v1h-1zM456 12h1v1h-1zM456 18h1v1h-1zM456 21h1v1h-1zM458 19h1v1h-1zM458 23h1v1h-1zM459 15h1v1h-1zM460 19h1v1h-1zM461 18h1v1h-1zM463 17h1v1h-1zM464 13h1v1h-1zM464 17h1v1h-1zM465 21h1v1h-1zM466 13h1v1h-1zM469 22h1v1h-1zM476 14h1v1h-1zM476 18h1v1h-1zM478 17h1v1h-1zM482 20h1v1h-1zM483 14h1v1h-1zM483 18h1v1h-1zM483 22h1v1h-1zM486 18h1v1h-1zM491 26h1v1h-1zM492 22h1v1h-1zM494 13h1v1h-1zM494 16h1v1h-1zM495 19h1v1h-1zM496 25h1v1h-1zM499 19h1v1h-1zM500 21h1v1h-1zM501 16h1v1h-1zM502 16h1v1h-1zM502 23h1v1h-1zM503 17h1v1h-1zM505 19h1v1h-1zM507 21h1v1h-1zM507 25h1v1h-1zM508 16h1v1h-1zM509 22h1v1h-1zM510 20h1v1h-1zM510 24h1v1h-1zM513 18h1v1h-1zM514 21h1v1h-1zM515 15h1v1h-1zM515 20h1v1h-1zM517 19h1v1h-1zM518 18h1v1h-1zM518 23h1v1h-1zM521 13h1v1h-1zM521 15h1v1h-1zM521 18h1v1h-1zM525 23h1v1h-1zM526 15h1v1h-1zM527 15h1v1h-1zM529 14h1v1h-1zM530 18h1v1h-1zM531 19h1v1h-1zM532 18h1v1h-1zM532 19h1v1h-1zM532 24h1v1h-1zM533 14h1v1h-1zM534 14h1v1h-1zM535 14h1v1h-1zM535 24h1v1h-1zM536 25h1v1h-1zM537 16h1v1h-1zM538 22h1v1h-1zM538 23h1v1h-1zM539 26h1v1h-1zM539 28h1v1h-1zM540 24h1v1h-1zM541 24h1v1h-1zM542 18h1v1h-1zM542 27h1v1h-1zM543 23h1v1h-1zM545 21h1v1h-1zM545 24h1v1h-1zM546 23h1v1h-1zM547 22h1v1h-1zM548 27h1v1h-1zM549 20h1v1h-1zM549 26h1v1h-1zM550 14h1v1h-1zM550 15h1v1h-1zM552 15h1v1h-1zM553 21h1v1h-1zM554 16h1v1h-1zM554 22h1v1h-1zM556 25h1v1h-1zM557 24h1v1h-1zM557 27h1v1h-1zM558 17h1v1h-1zM559 15h1v1h-1zM559 16h1v1h-1zM560 22h1v1h-1zM561 17h1v1h-1zM561 24h1v1h-1zM563 15h1v1h-1zM563 19h1v1h-1zM564 16h1v1h-1zM564 19h1v1h-1zM567 14h1v1h-1zM568 24h1v1h-1zM569 20h1v1h-1zM569 23h1v1h-1zM570 24h1v1h-1zM572 14h1v1h-1zM572 15h1v1h-1zM572 20h1v1h-1zM572 21h1v1h-1zM574 13h1v1h-1zM574 19h1v1h-1zM575 15h1v1h-1zM576 18h1v1h-1zM578 17h1v1h-1zM580 13h1v1h-1zM581 21h1v1h-1zM581 22h1v1h-1zM583 15h1v1h-1zM583 20h1v1h-1zM583 23h1v1h-1zM583 24h1v1h-1zM584 15h1v1h-1zM587 17h1v1h-1zM589 18h1v1h-1zM591 16h1v1h-1zM591 24h1v1h-1zM592 22h1v1h-1zM594 18h1v1h-1zM594 20h1v1h-1zM595 23h1v1h-1zM597 19h1v1h-1zM597 23h1v1h-1zM598 18h1v1h-1zM603 16h1v1h-1zM603 22h1v1h-1zM604 15h1v1h-1zM605 24h1v1h-1zM606 20h1v1h-1zM609 17h1v1h-1zM610 22h1v1h-1zM610 23h1v1h-1zM611 17h1v1h-1zM613 15h1v1h-1zM615 21h1v1h-1zM616 24h1v1h-1zM617 19h1v1h-1zM618 21h1v1h-1zM620 15h1v1h-1zM622 21h1v1h-1zM625 14h1v1h-1zM626 15h1v1h-1zM626 16h1v1h-1zM626 20h1v1h-1zM627 17h1v1h-1zM629 20h1v1h-1zM630 19h1v1h-1zM632 16h1v1h-1zM632 24h1v1h-1zM633 16h1v1h-1zM633 20h1v1h-1zM634 13h1v1h-1zM634 17h1v1h-1zM635 19h1v1h-1zM637 18h1v1h-1zM638 14h1v1h-1zM640 15h1v1h-1zM640 19h1v1h-1zM642 23h1v1h-1zM644 16h1v1h-1zM645 12h1v1h-1zM647 20h1v1h-1zM648 20h1v1h-1zM650 15h1v1h-1zM651 14h1v1h-1zM654 15h1v1h-1zM657 19h1v1h-1zM658 12h1v1h-1zM658 18h1v1h-1zM659 21h1v1h-1zM660 14h1v1h-1zM662 20h1v1h-1zM662 23h1v1h-1zM663 15h1v1h-1zM666 21h1v1h-1zM667 17h1v1h-1zM667 21h1v1h-1zM670 18h1v1h-1zM670 22h1v1h-1zM671 20h1v1h-1zM671 23h1v1h-1zM671 26h1v1h-1zM673 23h1v1h-1zM674 20h1v1h-1zM675 14h1v1h-1zM676 16h1v1h-1zM678 25h1v1h-1zM680 22h1v1h-1zM685 22h1v1h-1zM686 22h1v1h-1zM687 14h1v1h-1zM687 15h1v1h-1zM688 23h1v1h-1zM689 14h1v1h-1zM694 20h1v1h-1zM695 19h1v1h-1zM695 20h1v1h-1zM696 19h1v1h-1zM696 23h1v1h-1zM698 18h1v1h-1zM698 20h1v1h-1zM701 13h1v1h-1zM702 23h1v1h-1zM704 17h1v1h-1zM705 13h1v1h-1zM705 18h1v1h-1zM706 21h1v1h-1zM707 22h1v1h-1zM708 15h1v1h-1zM709 16h1v1h-1zM709 17h1v1h-1zM710 23h1v1h-1zM711 18h1v1h-1zM712 20h1v1h-1zM713 14h1v1h-1zM713 16h1v1h-1zM714 17h1v1h-1zM714 24h1v1h-1zM719 16h1v1h-1zM719 20h1v1h-1zM720 24h1v1h-1zM721 16h1v1h-1zM723 24h1v1h-1zM724 21h1v1h-1zM726 19h1v1h-1zM727 17h1v1h-1zM728 16h1v1h-1zM728 20h1v1h-1zM730 17h1v1h-1zM731 14h1v1h-1zM732 21h1v1h-1zM733 13h1v1h-1zM734 21h1v1h-1zM735 15h1v1h-1zM736 20h1v1h-1zM737 11h1v1h-1zM738 20h1v1h-1zM739 16h1v1h-1zM739 19h1v1h-1zM739 21h1v1h-1zM740 18h1v1h-1zM740 19h1v1h-1zM741 12h1v1h-1zM741 16h1v1h-1zM742 17h1v1h-1zM744 12h1v1h-1zM746 17h1v1h-1zM747 13h1v1h-1zM747 14h1v1h-1zM752 11h1v1h-1zM753 9h1v1h-1zM753 20h1v1h-1zM758 16h1v1h-1zM762 17h1v1h-1zM762 18h1v1h-1zM765 12h1v1h-1zM769 18h1v1h-1zM770 12h1v1h-1zM771 14h1v1h-1zM773 16h1v1h-1zM775 15h1v1h-1zM775 17h1v1h-1zM780 10h1v1h-1zM782 13h1v1h-1zM782 16h1v1h-1zM783 12h1v1h-1zM783 19h1v1h-1zM784 20h1v1h-1zM787 19h1v1h-1zM790 17h1v1h-1zM791 12h1v1h-1zM793 17h1v1h-1zM794 14h1v1h-1zM795 9h1v1h-1zM796 17h1v1h-1zM798 18h1v1h-1zM799 14h1v1h-1z" fill="#44522a"/><path d="M0 19h1v1h-1zM0 23h1v1h-1zM2 24h1v1h-1zM3 17h1v1h-1zM6 15h1v1h-1zM7 15h1v1h-1zM7 19h1v1h-1zM9 19h1v1h-1zM10 27h1v1h-1zM11 21h1v1h-1zM13 23h1v1h-1zM13 25h1v1h-1zM14 20h1v1h-1zM14 24h1v1h-1zM15 20h1v1h-1zM16 17h1v1h-1zM16 24h1v1h-1zM16 28h1v1h-1zM17 11h1v1h-1zM18 11h1v1h-1zM18 17h1v1h-1zM19 12h1v1h-1zM19 22h1v1h-1zM20 22h1v1h-1zM21 15h1v1h-1zM21 20h1v1h-1zM22 20h1v1h-1zM23 15h1v1h-1zM24 26h1v1h-1zM24 28h1v1h-1zM28 19h1v1h-1zM29 13h1v1h-1zM29 26h1v1h-1zM30 16h1v1h-1zM32 13h1v1h-1zM32 16h1v1h-1zM32 17h1v1h-1zM32 20h1v1h-1zM33 13h1v1h-1zM33 17h1v1h-1zM33 24h1v1h-1zM35 17h1v1h-1zM35 24h1v1h-1zM35 25h1v1h-1zM37 16h1v1h-1zM40 18h1v1h-1zM41 14h1v1h-1zM43 20h1v1h-1zM45 16h1v1h-1zM45 23h1v1h-1zM49 15h1v1h-1zM50 17h1v1h-1zM52 14h1v1h-1zM52 16h1v1h-1zM52 19h1v1h-1zM53 14h1v1h-1zM53 17h1v1h-1zM54 17h1v1h-1zM54 19h1v1h-1zM57 17h1v1h-1zM57 24h1v1h-1zM58 19h1v1h-1zM58 20h1v1h-1zM59 20h1v1h-1zM59 21h1v1h-1zM62 17h1v1h-1zM62 21h1v1h-1zM63 17h1v1h-1zM63 18h1v1h-1zM64 21h1v1h-1zM64 22h1v1h-1zM65 15h1v1h-1zM66 19h1v1h-1zM66 20h1v1h-1zM67 12h1v1h-1zM70 16h1v1h-1zM70 18h1v1h-1zM71 16h1v1h-1zM71 18h1v1h-1zM71 20h1v1h-1zM77 15h1v1h-1zM77 20h1v1h-1zM77 26h1v1h-1zM78 21h1v1h-1zM79 24h1v1h-1zM80 24h1v1h-1zM81 22h1v1h-1zM82 16h1v1h-1zM84 15h1v1h-1zM84 22h1v1h-1zM87 14h1v1h-1zM89 18h1v1h-1zM92 18h1v1h-1zM93 20h1v1h-1zM94 21h1v1h-1zM97 14h1v1h-1zM97 16h1v1h-1zM99 19h1v1h-1zM100 18h1v1h-1zM103 23h1v1h-1zM105 18h1v1h-1zM105 20h1v1h-1zM107 17h1v1h-1zM108 15h1v1h-1zM110 20h1v1h-1zM110 22h1v1h-1zM112 14h1v1h-1zM112 17h1v1h-1zM113 12h1v1h-1zM114 14h1v1h-1zM114 16h1v1h-1zM116 17h1v1h-1zM116 21h1v1h-1zM118 16h1v1h-1zM119 16h1v1h-1zM119 18h1v1h-1zM119 22h1v1h-1zM120 12h1v1h-1zM120 23h1v1h-1zM121 19h1v1h-1zM122 24h1v1h-1zM123 17h1v1h-1zM124 19h1v1h-1zM124 20h1v1h-1zM127 15h1v1h-1zM128 19h1v1h-1zM128 22h1v1h-1zM129 19h1v1h-1zM129 20h1v1h-1zM129 24h1v1h-1zM130 16h1v1h-1zM130 19h1v1h-1zM131 24h1v1h-1zM133 18h1v1h-1zM134 15h1v1h-1zM136 22h1v1h-1zM138 20h1v1h-1zM138 22h1v1h-1zM143 19h1v1h-1zM145 13h1v1h-1zM147 17h1v1h-1zM148 17h1v1h-1zM148 24h1v1h-1zM153 16h1v1h-1zM154 18h1v1h-1zM154 21h1v1h-1zM155 18h1v1h-1zM156 15h1v1h-1zM159 21h1v1h-1zM161 22h1v1h-1zM162 18h1v1h-1zM163 19h1v1h-1zM163 20h1v1h-1zM163 21h1v1h-1zM164 15h1v1h-1zM164 20h1v1h-1zM168 23h1v1h-1zM169 24h1v1h-1zM175 19h1v1h-1zM175 20h1v1h-1zM175 25h1v1h-1zM177 19h1v1h-1zM178 24h1v1h-1zM180 20h1v1h-1zM181 22h1v1h-1zM182 19h1v1h-1zM182 22h1v1h-1zM183 21h1v1h-1zM183 23h1v1h-1zM185 21h1v1h-1zM187 17h1v1h-1zM192 15h1v1h-1zM194 15h1v1h-1zM195 20h1v1h-1zM197 17h1v1h-1zM199 24h1v1h-1zM208 22h1v1h-1zM210 13h1v1h-1zM210 19h1v1h-1zM211 14h1v1h-1zM211 16h1v1h-1zM211 17h1v1h-1zM212 16h1v1h-1zM214 18h1v1h-1zM214 22h1v1h-1zM215 14h1v1h-1zM215 21h1v1h-1zM218 24h1v1h-1zM220 14h1v1h-1zM221 17h1v1h-1zM221 22h1v1h-1zM223 13h1v1h-1zM223 15h1v1h-1zM223 16h1v1h-1zM223 21h1v1h-1zM224 21h1v1h-1zM224 22h1v1h-1zM224 23h1v1h-1zM225 21h1v1h-1zM226 13h1v1h-1zM227 18h1v1h-1zM228 18h1v1h-1zM229 14h1v1h-1zM229 20h1v1h-1zM230 26h1v1h-1zM232 22h1v1h-1zM233 19h1v1h-1zM233 22h1v1h-1zM235 20h1v1h-1zM236 22h1v1h-1zM237 14h1v1h-1zM237 22h1v1h-1zM238 23h1v1h-1zM241 18h1v1h-1zM242 25h1v1h-1zM244 21h1v1h-1zM245 18h1v1h-1zM246 24h1v1h-1zM247 20h1v1h-1zM248 23h1v1h-1zM250 22h1v1h-1zM251 25h1v1h-1zM251 26h1v1h-1zM253 26h1v1h-1zM255 21h1v1h-1zM256 18h1v1h-1zM256 21h1v1h-1zM257 23h1v1h-1zM257 25h1v1h-1zM258 25h1v1h-1zM259 17h1v1h-1zM260 18h1v1h-1zM262 23h1v1h-1zM262 25h1v1h-1zM263 21h1v1h-1zM265 20h1v1h-1zM267 17h1v1h-1zM267 20h1v1h-1zM267 25h1v1h-1zM269 18h1v1h-1zM270 21h1v1h-1zM270 23h1v1h-1zM272 17h1v1h-1zM273 17h1v1h-1zM275 15h1v1h-1zM276 24h1v1h-1zM277 20h1v1h-1zM279 23h1v1h-1zM282 27h1v1h-1zM283 23h1v1h-1zM283 25h1v1h-1zM284 13h1v1h-1zM284 17h1v1h-1zM284 18h1v1h-1zM288 19h1v1h-1zM288 21h1v1h-1zM289 21h1v1h-1zM289 23h1v1h-1zM291 26h1v1h-1zM292 18h1v1h-1zM292 19h1v1h-1zM293 23h1v1h-1zM294 16h1v1h-1zM297 16h1v1h-1zM298 17h1v1h-1zM299 25h1v1h-1zM299 26h1v1h-1zM300 21h1v1h-1zM301 17h1v1h-1zM303 20h1v1h-1zM304 23h1v1h-1zM304 27h1v1h-1zM307 23h1v1h-1zM309 23h1v1h-1zM310 17h1v1h-1zM310 18h1v1h-1zM311 18h1v1h-1zM314 16h1v1h-1zM317 16h1v1h-1zM318 17h1v1h-1zM318 18h1v1h-1zM320 15h1v1h-1zM324 16h1v1h-1zM325 19h1v1h-1zM326 14h1v1h-1zM327 17h1v1h-1zM327 22h1v1h-1zM328 22h1v1h-1zM330 19h1v1h-1zM331 23h1v1h-1zM333 19h1v1h-1zM333 20h1v1h-1zM335 17h1v1h-1zM336 15h1v1h-1zM337 20h1v1h-1zM338 19h1v1h-1zM339 16h1v1h-1zM339 23h1v1h-1zM340 21h1v1h-1zM340 22h1v1h-1zM345 15h1v1h-1zM346 17h1v1h-1zM346 20h1v1h-1zM346 22h1v1h-1zM347 12h1v1h-1zM347 15h1v1h-1zM349 21h1v1h-1zM350 23h1v1h-1zM357 13h1v1h-1zM358 23h1v1h-1zM359 24h1v1h-1zM360 22h1v1h-1zM361 15h1v1h-1zM361 22h1v1h-1zM362 24h1v1h-1zM363 16h1v1h-1zM363 17h1v1h-1zM363 22h1v1h-1zM364 22h1v1h-1zM366 22h1v1h-1zM367 24h1v1h-1zM368 18h1v1h-1zM371 20h1v1h-1zM373 17h1v1h-1zM376 19h1v1h-1zM378 13h1v1h-1zM378 23h1v1h-1zM379 13h1v1h-1zM380 18h1v1h-1zM381 15h1v1h-1zM382 22h1v1h-1zM384 21h1v1h-1zM384 25h1v1h-1zM385 18h1v1h-1zM387 13h1v1h-1zM387 16h1v1h-1zM388 14h1v1h-1zM389 22h1v1h-1zM390 14h1v1h-1zM392 20h1v1h-1zM392 23h1v1h-1zM393 19h1v1h-1zM394 16h1v1h-1zM396 20h1v1h-1zM397 20h1v1h-1zM399 13h1v1h-1zM399 15h1v1h-1zM399 18h1v1h-1zM399 20h1v1h-1zM400 22h1v1h-1zM401 18h1v1h-1zM401 20h1v1h-1zM402 16h1v1h-1zM402 20h1v1h-1zM404 15h1v1h-1zM405 21h1v1h-1zM409 21h1v1h-1zM409 25h1v1h-1zM410 17h1v1h-1zM410 20h1v1h-1zM413 24h1v1h-1zM414 17h1v1h-1zM414 21h1v1h-1zM414 24h1v1h-1zM416 19h1v1h-1zM416 24h1v1h-1zM416 26h1v1h-1zM423 19h1v1h-1zM424 16h1v1h-1zM425 23h1v1h-1zM425 27h1v1h-1zM428 21h1v1h-1zM428 22h1v1h-1zM429 17h1v1h-1zM430 24h1v1h-1zM431 19h1v1h-1zM432 27h1v1h-1zM433 18h1v1h-1zM433 24h1v1h-1zM434 21h1v1h-1zM435 21h1v1h-1zM435 27h1v1h-1zM436 13h1v1h-1zM438 14h1v1h-1zM438 17h1v1h-1zM439 13h1v1h-1zM439 15h1v1h-1zM439 22h1v1h-1zM441 22h1v1h-1zM442 20h1v1h-1zM443 16h1v1h-1zM444 25h1v1h-1zM445 14h1v1h-1zM445 15h1v1h-1zM445 18h1v1h-1zM445 19h1v1h-1zM446 17h1v1h-1zM447 22h1v1h-1zM447 23h1v1h-1zM447 26h1v1h-1zM448 23h1v1h-1zM449 18h1v1h-1zM449 19h1v1h-1zM449 21h1v1h-1zM449 24h1v1h-1zM450 23h1v1h-1zM451 21h1v1h-1zM453 24h1v1h-1zM454 14h1v1h-1zM455 12h1v1h-1zM456 11h1v1h-1zM456 22h1v1h-1zM457 23h1v1h-1zM458 14h1v1h-1zM461 19h1v1h-1zM463 15h1v1h-1zM463 23h1v1h-1zM464 19h1v1h-1zM465 18h1v1h-1zM468 22h1v1h-1zM468 23h1v1h-1zM471 11h1v1h-1zM471 18h1v1h-1zM474 14h1v1h-1zM475 14h1v1h-1zM477 20h1v1h-1zM478 21h1v1h-1zM478 25h1v1h-1zM479 20h1v1h-1zM479 22h1v1h-1zM480 16h1v1h-1zM481 19h1v1h-1zM481 21h1v1h-1zM481 26h1v1h-1zM482 21h1v1h-1zM483 21h1v1h-1zM484 20h1v1h-1zM485 15h1v1h-1zM487 15h1v1h-1zM487 17h1v1h-1zM487 20h1v1h-1zM488 23h1v1h-1zM489 18h1v1h-1zM489 24h1v1h-1zM492 18h1v1h-1zM494 23h1v1h-1zM497 18h1v1h-1zM499 21h1v1h-1zM500 12h1v1h-1zM501 22h1v1h-1zM501 24h1v1h-1zM502 13h1v1h-1zM502 22h1v1h-1zM503 13h1v1h-1zM503 21h1v1h-1zM505 16h1v1h-1zM509 28h1v1h-1zM510 17h1v1h-1zM511 19h1v1h-1zM512 17h1v1h-1zM512 19h1v1h-1zM513 19h1v1h-1zM515 16h1v1h-1zM515 17h1v1h-1zM515 19h1v1h-1zM516 12h1v1h-1zM516 19h1v1h-1zM516 24h1v1h-1zM517 12h1v1h-1zM517 21h1v1h-1zM518 14h1v1h-1zM520 14h1v1h-1zM521 19h1v1h-1zM523 17h1v1h-1zM523 20h1v1h-1zM525 22h1v1h-1zM526 12h1v1h-1zM527 18h1v1h-1zM528 12h1v1h-1zM528 20h1v1h-1zM530 14h1v1h-1zM533 18h1v1h-1zM534 20h1v1h-1zM539 27h1v1h-1zM540 22h1v1h-1zM542 19h1v1h-1zM542 20h1v1h-1zM543 20h1v1h-1zM544 16h1v1h-1zM544 25h1v1h-1zM545 18h1v1h-1zM545 20h1v1h-1zM545 27h1v1h-1zM546 18h1v1h-1zM546 28h1v1h-1zM550 22h1v1h-1zM551 26h1v1h-1zM552 21h1v1h-1zM553 17h1v1h-1zM553 18h1v1h-1zM553 25h1v1h-1zM554 18h1v1h-1zM555 19h1v1h-1zM555 26h1v1h-1zM556 14h1v1h-1zM556 15h1v1h-1zM556 20h1v1h-1zM557 21h1v1h-1zM558 20h1v1h-1zM558 24h1v1h-1zM558 25h1v1h-1zM559 24h1v1h-1zM561 23h1v1h-1zM565 14h1v1h-1zM565 22h1v1h-1zM565 25h1v1h-1zM566 20h1v1h-1zM566 21h1v1h-1zM567 23h1v1h-1zM568 21h1v1h-1zM569 22h1v1h-1zM570 18h1v1h-1zM571 17h1v1h-1zM573 23h1v1h-1zM575 13h1v1h-1zM577 24h1v1h-1zM579 20h1v1h-1zM581 15h1v1h-1zM581 17h1v1h-1zM582 22h1v1h-1zM583 18h1v1h-1zM584 16h1v1h-1zM584 24h1v1h-1zM585 19h1v1h-1zM586 18h1v1h-1zM587 16h1v1h-1zM588 21h1v1h-1zM589 17h1v1h-1zM589 19h1v1h-1zM590 17h1v1h-1zM590 20h1v1h-1zM591 25h1v1h-1zM592 23h1v1h-1zM592 25h1v1h-1zM593 26h1v1h-1zM594 15h1v1h-1zM595 15h1v1h-1zM596 17h1v1h-1zM596 19h1v1h-1zM597 22h1v1h-1zM598 21h1v1h-1zM602 18h1v1h-1zM603 21h1v1h-1zM603 25h1v1h-1zM604 16h1v1h-1zM604 20h1v1h-1zM606 17h1v1h-1zM608 19h1v1h-1zM608 20h1v1h-1zM609 16h1v1h-1zM609 24h1v1h-1zM610 16h1v1h-1zM610 17h1v1h-1zM611 25h1v1h-1zM612 15h1v1h-1zM613 21h1v1h-1zM615 18h1v1h-1zM617 21h1v1h-1zM618 25h1v1h-1zM619 22h1v1h-1zM620 16h1v1h-1zM620 18h1v1h-1zM620 20h1v1h-1zM621 21h1v1h-1zM622 22h1v1h-1zM623 19h1v1h-1zM624 13h1v1h-1zM624 18h1v1h-1zM626 25h1v1h-1zM627 12h1v1h-1zM627 21h1v1h-1zM628 12h1v1h-1zM629 21h1v1h-1zM633 13h1v1h-1zM633 18h1v1h-1zM634 21h1v1h-1zM635 14h1v1h-1zM635 18h1v1h-1zM635 21h1v1h-1zM638 17h1v1h-1zM638 20h1v1h-1zM640 14h1v1h-1zM640 20h1v1h-1zM641 16h1v1h-1zM642 22h1v1h-1zM643 19h1v1h-1zM643 24h1v1h-1zM644 23h1v1h-1zM644 24h1v1h-1zM645 27h1v1h-1zM646 18h1v1h-1zM646 19h1v1h-1zM647 25h1v1h-1zM648 18h1v1h-1zM649 18h1v1h-1zM650 16h1v1h-1zM651 17h1v1h-1zM652 19h1v1h-1zM654 20h1v1h-1zM654 22h1v1h-1zM655 20h1v1h-1zM655 22h1v1h-1zM656 23h1v1h-1zM657 13h1v1h-1zM658 19h1v1h-1zM658 22h1v1h-1zM659 14h1v1h-1zM660 15h1v1h-1zM660 18h1v1h-1zM660 20h1v1h-1zM661 24h1v1h-1zM665 20h1v1h-1zM665 22h1v1h-1zM666 19h1v1h-1zM666 25h1v1h-1zM668 22h1v1h-1zM671 16h1v1h-1zM673 19h1v1h-1zM675 16h1v1h-1zM675 21h1v1h-1zM676 17h1v1h-1zM676 22h1v1h-1zM677 17h1v1h-1zM677 21h1v1h-1zM679 21h1v1h-1zM680 14h1v1h-1zM681 19h1v1h-1zM681 25h1v1h-1zM683 21h1v1h-1zM686 18h1v1h-1zM686 19h1v1h-1zM687 18h1v1h-1zM687 19h1v1h-1zM688 19h1v1h-1zM689 20h1v1h-1zM689 24h1v1h-1zM693 17h1v1h-1zM693 23h1v1h-1zM695 21h1v1h-1zM696 20h1v1h-1zM696 21h1v1h-1zM697 20h1v1h-1zM698 15h1v1h-1zM698 16h1v1h-1zM699 18h1v1h-1zM699 22h1v1h-1zM700 10h1v1h-1zM700 14h1v1h-1zM701 17h1v1h-1zM703 14h1v1h-1zM705 16h1v1h-1zM706 18h1v1h-1zM707 14h1v1h-1zM710 12h1v1h-1zM710 17h1v1h-1zM710 20h1v1h-1zM710 22h1v1h-1zM711 13h1v1h-1zM715 14h1v1h-1zM716 16h1v1h-1zM716 17h1v1h-1zM717 16h1v1h-1zM717 19h1v1h-1zM717 27h1v1h-1zM719 15h1v1h-1zM722 19h1v1h-1zM723 14h1v1h-1zM723 19h1v1h-1zM725 20h1v1h-1zM725 23h1v1h-1zM726 17h1v1h-1zM728 19h1v1h-1zM731 23h1v1h-1zM734 18h1v1h-1zM739 18h1v1h-1zM739 23h1v1h-1zM740 15h1v1h-1zM741 17h1v1h-1zM741 20h1v1h-1zM742 14h1v1h-1zM743 13h1v1h-1zM743 18h1v1h-1zM743 21h1v1h-1zM744 19h1v1h-1zM745 15h1v1h-1zM745 21h1v1h-1zM747 21h1v1h-1zM748 14h1v1h-1zM750 14h1v1h-1zM753 13h1v1h-1zM753 14h1v1h-1zM754 14h1v1h-1zM758 11h1v1h-1zM758 12h1v1h-1zM758 17h1v1h-1zM762 10h1v1h-1zM763 11h1v1h-1zM763 15h1v1h-1zM764 10h1v1h-1zM764 12h1v1h-1zM764 14h1v1h-1zM764 18h1v1h-1zM765 19h1v1h-1zM765 20h1v1h-1zM766 14h1v1h-1zM766 19h1v1h-1zM767 13h1v1h-1zM767 14h1v1h-1zM769 12h1v1h-1zM769 19h1v1h-1zM773 12h1v1h-1zM773 13h1v1h-1zM775 12h1v1h-1zM776 16h1v1h-1zM778 11h1v1h-1zM778 13h1v1h-1zM779 15h1v1h-1zM779 18h1v1h-1zM781 13h1v1h-1zM785 13h1v1h-1zM786 11h1v1h-1zM787 12h1v1h-1zM787 17h1v1h-1zM788 17h1v1h-1zM789 11h1v1h-1zM789 13h1v1h-1zM789 15h1v1h-1zM789 18h1v1h-1zM791 17h1v1h-1zM792 13h1v1h-1zM794 13h1v1h-1zM796 12h1v1h-1zM797 12h1v1h-1z" fill="#35442a"/><path d="M1 17h1v1h-1zM4 18h1v1h-1zM8 14h1v1h-1zM9 20h1v1h-1zM11 25h1v1h-1zM12 25h1v1h-1zM13 19h1v1h-1zM14 23h1v1h-1zM16 13h1v1h-1zM16 22h1v1h-1zM16 23h1v1h-1zM18 19h1v1h-1zM21 25h1v1h-1zM22 25h1v1h-1zM24 16h1v1h-1zM24 20h1v1h-1zM25 16h1v1h-1zM26 23h1v1h-1zM28 23h1v1h-1zM29 16h1v1h-1zM30 17h1v1h-1zM32 10h1v1h-1zM36 21h1v1h-1zM37 24h1v1h-1zM40 19h1v1h-1zM40 22h1v1h-1zM43 16h1v1h-1zM44 16h1v1h-1zM45 13h1v1h-1zM45 17h1v1h-1zM46 17h1v1h-1zM48 23h1v1h-1zM52 24h1v1h-1zM53 18h1v1h-1zM55 18h1v1h-1zM57 20h1v1h-1zM57 22h1v1h-1zM58 17h1v1h-1zM66 17h1v1h-1zM66 18h1v1h-1zM68 16h1v1h-1zM70 17h1v1h-1zM71 22h1v1h-1zM76 24h1v1h-1zM77 22h1v1h-1zM79 22h1v1h-1zM86 20h1v1h-1zM89 19h1v1h-1zM90 13h1v1h-1zM92 16h1v1h-1zM96 19h1v1h-1zM97 15h1v1h-1zM97 18h1v1h-1zM101 20h1v1h-1zM101 21h1v1h-1zM103 21h1v1h-1zM105 16h1v1h-1zM106 19h1v1h-1zM108 19h1v1h-1zM118 24h1v1h-1zM119 17h1v1h-1zM128 20h1v1h-1zM134 23h1v1h-1zM135 26h1v1h-1zM138 17h1v1h-1zM140 13h1v1h-1zM140 14h1v1h-1zM144 17h1v1h-1zM145 20h1v1h-1zM146 22h1v1h-1zM153 19h1v1h-1zM154 14h1v1h-1zM154 22h1v1h-1zM155 21h1v1h-1zM161 19h1v1h-1zM162 17h1v1h-1zM165 19h1v1h-1zM166 18h1v1h-1zM170 20h1v1h-1zM170 21h1v1h-1zM171 22h1v1h-1zM172 19h1v1h-1zM173 20h1v1h-1zM173 23h1v1h-1zM174 23h1v1h-1zM175 18h1v1h-1zM178 19h1v1h-1zM182 26h1v1h-1zM184 19h1v1h-1zM187 25h1v1h-1zM189 23h1v1h-1zM194 18h1v1h-1zM196 21h1v1h-1zM198 19h1v1h-1zM198 23h1v1h-1zM200 16h1v1h-1zM200 22h1v1h-1zM201 17h1v1h-1zM202 21h1v1h-1zM203 23h1v1h-1zM204 22h1v1h-1zM205 16h1v1h-1zM206 19h1v1h-1zM207 17h1v1h-1zM207 20h1v1h-1zM207 21h1v1h-1zM210 14h1v1h-1zM213 15h1v1h-1zM213 20h1v1h-1zM216 14h1v1h-1zM217 18h1v1h-1zM222 24h1v1h-1zM226 22h1v1h-1zM227 15h1v1h-1zM234 17h1v1h-1zM234 20h1v1h-1zM235 21h1v1h-1zM236 20h1v1h-1zM237 17h1v1h-1zM237 18h1v1h-1zM239 26h1v1h-1zM240 27h1v1h-1zM245 16h1v1h-1zM247 18h1v1h-1zM248 17h1v1h-1zM254 15h1v1h-1zM255 27h1v1h-1zM257 16h1v1h-1zM260 19h1v1h-1zM260 20h1v1h-1zM260 25h1v1h-1zM261 20h1v1h-1zM262 17h1v1h-1zM266 14h1v1h-1zM268 20h1v1h-1zM269 15h1v1h-1zM273 21h1v1h-1zM274 13h1v1h-1zM276 18h1v1h-1zM281 15h1v1h-1zM282 24h1v1h-1zM283 18h1v1h-1zM283 21h1v1h-1zM290 21h1v1h-1zM293 26h1v1h-1zM294 22h1v1h-1zM295 19h1v1h-1zM297 13h1v1h-1zM297 15h1v1h-1zM302 19h1v1h-1zM305 19h1v1h-1zM311 17h1v1h-1zM312 18h1v1h-1zM314 19h1v1h-1zM316 24h1v1h-1zM319 18h1v1h-1zM322 25h1v1h-1zM325 23h1v1h-1zM326 12h1v1h-1zM327 23h1v1h-1zM330 20h1v1h-1zM332 18h1v1h-1zM338 16h1v1h-1zM338 23h1v1h-1zM340 17h1v1h-1zM342 22h1v1h-1zM343 22h1v1h-1zM347 22h1v1h-1zM351 17h1v1h-1zM352 21h1v1h-1zM353 19h1v1h-1zM354 21h1v1h-1zM356 14h1v1h-1zM357 21h1v1h-1zM357 24h1v1h-1zM364 21h1v1h-1zM365 20h1v1h-1zM368 21h1v1h-1zM369 16h1v1h-1zM371 15h1v1h-1zM374 19h1v1h-1zM376 23h1v1h-1zM382 16h1v1h-1zM384 19h1v1h-1zM385 15h1v1h-1zM386 24h1v1h-1zM387 17h1v1h-1zM390 12h1v1h-1zM391 20h1v1h-1zM394 24h1v1h-1zM396 16h1v1h-1zM398 17h1v1h-1zM402 15h1v1h-1zM403 24h1v1h-1zM404 14h1v1h-1zM404 18h1v1h-1zM413 20h1v1h-1zM415 25h1v1h-1zM417 23h1v1h-1zM421 22h1v1h-1zM421 25h1v1h-1zM425 21h1v1h-1zM425 24h1v1h-1zM426 22h1v1h-1zM427 19h1v1h-1zM432 22h1v1h-1zM437 21h1v1h-1zM438 19h1v1h-1zM440 19h1v1h-1zM441 17h1v1h-1zM441 27h1v1h-1zM442 14h1v1h-1zM442 17h1v1h-1zM448 15h1v1h-1zM449 25h1v1h-1zM450 10h1v1h-1zM450 13h1v1h-1zM451 18h1v1h-1zM451 25h1v1h-1zM453 13h1v1h-1zM455 13h1v1h-1zM460 17h1v1h-1zM465 20h1v1h-1zM470 17h1v1h-1zM470 20h1v1h-1zM471 15h1v1h-1zM471 21h1v1h-1zM475 25h1v1h-1zM477 15h1v1h-1zM480 18h1v1h-1zM480 23h1v1h-1zM488 19h1v1h-1zM491 24h1v1h-1zM494 17h1v1h-1zM495 21h1v1h-1zM496 21h1v1h-1zM498 18h1v1h-1zM500 22h1v1h-1zM501 21h1v1h-1zM502 12h1v1h-1zM505 20h1v1h-1zM507 17h1v1h-1zM508 18h1v1h-1zM508 20h1v1h-1zM510 19h1v1h-1zM511 14h1v1h-1zM511 21h1v1h-1zM512 18h1v1h-1zM513 17h1v1h-1zM513 20h1v1h-1zM514 16h1v1h-1zM517 22h1v1h-1zM519 21h1v1h-1zM519 22h1v1h-1zM522 17h1v1h-1zM523 13h1v1h-1zM523 14h1v1h-1zM523 22h1v1h-1zM525 19h1v1h-1zM528 13h1v1h-1zM528 22h1v1h-1zM529 19h1v1h-1zM532 23h1v1h-1zM533 24h1v1h-1zM533 25h1v1h-1zM537 17h1v1h-1zM537 22h1v1h-1zM542 26h1v1h-1zM543 17h1v1h-1zM544 18h1v1h-1zM548 16h1v1h-1zM551 24h1v1h-1zM556 22h1v1h-1zM557 17h1v1h-1zM557 22h1v1h-1zM559 25h1v1h-1zM564 20h1v1h-1zM566 24h1v1h-1zM568 25h1v1h-1zM570 15h1v1h-1zM570 17h1v1h-1zM573 21h1v1h-1zM574 21h1v1h-1zM575 21h1v1h-1zM578 15h1v1h-1zM580 20h1v1h-1zM580 22h1v1h-1zM581 13h1v1h-1zM582 23h1v1h-1zM586 15h1v1h-1zM596 16h1v1h-1zM596 22h1v1h-1zM597 20h1v1h-1zM600 18h1v1h-1zM602 21h1v1h-1zM604 23h1v1h-1zM605 22h1v1h-1zM606 21h1v1h-1zM607 19h1v1h-1zM609 25h1v1h-1zM611 16h1v1h-1zM615 17h1v1h-1zM616 18h1v1h-1zM617 16h1v1h-1zM621 24h1v1h-1zM622 15h1v1h-1zM622 20h1v1h-1zM624 17h1v1h-1zM629 17h1v1h-1zM631 19h1v1h-1zM632 20h1v1h-1zM640 24h1v1h-1zM644 19h1v1h-1zM646 22h1v1h-1zM648 25h1v1h-1zM650 19h1v1h-1zM651 20h1v1h-1zM654 25h1v1h-1zM655 17h1v1h-1zM656 24h1v1h-1zM660 23h1v1h-1zM661 23h1v1h-1zM664 20h1v1h-1zM665 21h1v1h-1zM668 18h1v1h-1zM670 25h1v1h-1zM671 19h1v1h-1zM676 15h1v1h-1zM676 20h1v1h-1zM678 17h1v1h-1zM678 19h1v1h-1zM679 17h1v1h-1zM681 20h1v1h-1zM685 19h1v1h-1zM691 18h1v1h-1zM694 17h1v1h-1zM698 13h1v1h-1zM700 12h1v1h-1zM702 15h1v1h-1zM702 20h1v1h-1zM704 16h1v1h-1zM707 15h1v1h-1zM709 22h1v1h-1zM711 20h1v1h-1zM712 13h1v1h-1zM712 17h1v1h-1zM712 19h1v1h-1zM717 20h1v1h-1zM718 16h1v1h-1zM718 22h1v1h-1zM720 17h1v1h-1zM722 21h1v1h-1zM725 21h1v1h-1zM729 25h1v1h-1zM730 18h1v1h-1zM730 19h1v1h-1zM731 20h1v1h-1zM732 15h1v1h-1zM735 20h1v1h-1zM736 13h1v1h-1zM736 22h1v1h-1zM740 17h1v1h-1zM741 13h1v1h-1zM744 13h1v1h-1zM745 11h1v1h-1zM747 16h1v1h-1zM747 17h1v1h-1zM748 10h1v1h-1zM752 12h1v1h-1zM755 10h1v1h-1zM755 11h1v1h-1zM757 13h1v1h-1zM761 10h1v1h-1zM765 13h1v1h-1zM766 18h1v1h-1zM767 20h1v1h-1zM769 13h1v1h-1zM782 12h1v1h-1zM798 14h1v1h-1z" fill="#2c3c38"/></g></g></svg>
  <div id="tl4"></div><div id="bline"></div>
  <div class="txt" style="left:49px;top:136px;letter-spacing:0.1px">Signal</div>
  <div class="txt" style="left:319px;top:136px;letter-spacing:0.17px">Specification</div>
  <div class="radio" style="left:49px;top:238px"></div>
  <div class="txt" style="left:119px;top:245px;letter-spacing:-0.3px">100Base-T</div>
  <div class="txt" style="left:319px;top:245px">ANSIX3.263-1995</div>
  <div class="radio" style="left:49px;top:338px"><div class="dot"></div></div>
  <div class="txt" style="left:119px;top:345px;letter-spacing:-0.12px">1000Base-T</div>
  <div class="txt" style="left:319px;top:345px;letter-spacing:-0.2px;word-spacing:-0.4px">IEEE 802.3 Section 40</div>
</div>
<div id="bottom"></div>
</body></html>
